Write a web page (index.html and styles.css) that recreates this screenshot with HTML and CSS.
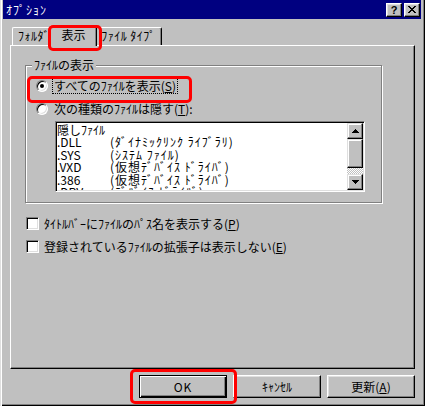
FILE: index.html
```html
<!DOCTYPE html>
<html lang="ja">
<head>
    <meta charset="UTF-8">
    <title>ｵﾌﾟｼｮﾝ</title>
    <link rel="stylesheet" href="styles.css">
</head>
<body>
    <div class="window">
        <div class="titlebar">
            <span class="title">ｵﾌﾟｼｮﾝ</span>
            <div class="caption-buttons">
                <button class="caption-button help-button">?</button>
                <button class="caption-button">
                    <svg width="8" height="7" viewBox="0 0 8 7" shape-rendering="crispEdges">
                        <path d="M0 0h2v1h1v1h2V1h1V0h2v1H7v1H6v1H5v1h1v1h1v1h1v1H6V6H5V5H3v1H2v1H0V6h1V5h1V4h1V3H2V2H1V1H0z" fill="#000"></path>
                    </svg>
                </button>
            </div>
        </div>

        <div class="dialog">
            <div class="tabs">
                <div class="tab tab-first">ﾌｫﾙﾀﾞ</div>
                <div class="tab tab-active">表示</div>
                <div class="tab tab-last">ﾌｧｲﾙ ﾀｲﾌﾟ</div>
            </div>

            <div class="panel">
                <div class="group">
                    <span class="group-title">ﾌｧｲﾙの表示</span>
                    <div class="option">
                        <span class="radio checked"></span>
                        <span class="option-label focused">すべてのﾌｧｲﾙを表示(<u>S</u>)</span>
                    </div>
                    <div class="option option-second">
                        <span class="radio"></span>
                        <span class="option-label">次の種類のﾌｧｲﾙは隠す(<u>T</u>):</span>
                    </div>
                    <div class="listbox">
                        <div class="list-items">
                            <div class="list-row">隠しﾌｧｲﾙ</div>
                            <div class="list-row"><span class="ext">.DLL</span><span class="desc">(ﾀﾞｲﾅﾐｯｸﾘﾝｸ ﾗｲﾌﾞﾗﾘ)</span></div>
                            <div class="list-row"><span class="ext">.SYS</span><span class="desc">(ｼｽﾃﾑ ﾌｧｲﾙ)</span></div>
                            <div class="list-row"><span class="ext">.VXD</span><span class="desc">(仮想ﾃﾞﾊﾞｲｽ ﾄﾞﾗｲﾊﾞ)</span></div>
                            <div class="list-row"><span class="ext">.386</span><span class="desc">(仮想ﾃﾞﾊﾞｲｽ ﾄﾞﾗｲﾊﾞ)</span></div>
                            <div class="list-row"><span class="ext">.DRV</span><span class="desc">(ﾃﾞﾊﾞｲｽ ﾄﾞﾗｲﾊﾞ)</span></div>
                        </div>
                        <div class="scrollbar">
                            <div class="scroll-button">
                                <svg width="7" height="4" viewBox="0 0 7 4" shape-rendering="crispEdges"><path d="M3 0h1v1h1v1h1v1h1v1H0V3h1V2h1V1h1z" fill="#000"></path></svg>
                            </div>
                            <div class="scroll-thumb"></div>
                            <div class="scroll-track"></div>
                            <div class="scroll-button">
                                <svg width="7" height="4" viewBox="0 0 7 4" shape-rendering="crispEdges"><path d="M0 0h7v1H6v1H5v1H4v1H3V3H2V2H1V1H0z" fill="#000"></path></svg>
                            </div>
                        </div>
                    </div>
                </div>

                <div class="check-row">
                    <span class="checkbox"></span>
                    <span>ﾀｲﾄﾙﾊﾞｰにﾌｧｲﾙのﾊﾟｽ名を表示する(<u>P</u>)</span>
                </div>
                <div class="check-row check-second">
                    <span class="checkbox"></span>
                    <span>登録されているﾌｧｲﾙの拡張子は表示しない(<u>E</u>)</span>
                </div>
            </div>

            <div class="buttons">
                <button class="push-button default-button">OK</button>
                <button class="push-button">ｷｬﾝｾﾙ</button>
                <button class="push-button">更新(<u>A</u>)</button>
            </div>
        </div>

        <!-- red highlight marks -->
        <div class="mark mark-tab"></div>
        <div class="mark mark-radio"></div>
        <div class="mark mark-ok"></div>
    </div>
</body>
</html>
```

FILE: styles.css
```css
body {
    margin: 0;
    font-family: "Noto Sans CJK JP", "Noto Sans", sans-serif;
    font-size: 12px;
    color: #000;
    background-color: #c0c0c0;
}
.window {
    position: relative;
    width: 425px;
    height: 406px;
    box-sizing: border-box;
    padding: 0 4px 4px 3px;
    background-color: #c0c0c0;
    box-shadow: inset 1px 0 #dfdfdf, inset 2px 0 #fff, inset -1px -1px #000, inset -2px -2px #808080;
    overflow: hidden;
}
.titlebar {
    display: flex;
    justify-content: space-between;
    align-items: center;
    height: 19px;
    padding: 0 1px 0 3px;
    background-color: #000080;
    color: #fff;
    line-height: 12px;
}
.title {
    letter-spacing: 1px;
}
.caption-buttons {
    display: flex;
    gap: 2px;
}
.caption-button {
    display: flex;
    justify-content: center;
    align-items: center;
    width: 16px;
    height: 14px;
    padding: 0;
    box-sizing: border-box;
    background-color: #c0c0c0;
    border: 1px solid;
    border-color: #fff #000 #000 #fff;
    box-shadow: inset -1px -1px #808080, inset 1px 1px #dfdfdf;
}
.help-button {
    font-family: "Liberation Sans", sans-serif;
    font-weight: bold;
    font-size: 11px;
    line-height: 10px;
    color: #000;
}
.dialog {
    padding: 6px 6px 0 7px;
}
.tabs {
    display: flex;
    align-items: flex-end;
    height: 20px;
    padding-left: 2px;
}
.tab {
    height: 18px;
    box-sizing: border-box;
    border-top: 1px solid #fff;
    border-left: 1px solid #fff;
    border-right: 1px solid #000;
    border-top-left-radius: 2px;
    border-top-right-radius: 2px;
    box-shadow: inset -1px 0 #808080;
    line-height: 16px;
    white-space: nowrap;
    overflow: hidden;
}
.tab-first {
    width: 40px;
    padding-left: 5px;
    letter-spacing: 0.5px;
}
.tab-active {
    position: relative;
    z-index: 1;
    width: 47px;
    height: 21px;
    margin: 0 -2px -1px -2px;
    background-color: #c0c0c0;
    text-align: center;
    line-height: 17px;
}
.tab-last {
    width: 67px;
    text-align: center;
    letter-spacing: 0.5px;
}
.panel {
    height: 324px;
    box-sizing: border-box;
    border: 1px solid;
    border-color: #fff #000 #000 #fff;
    box-shadow: inset -1px -1px #808080;
    overflow: hidden;
}
.group {
    position: relative;
    width: 357px;
    height: 138px;
    box-sizing: border-box;
    margin: 19px 0 0 14px;
    padding: 12px 0 0 10px;
    border: 1px solid #808080;
    box-shadow: inset 1px 1px #fff, 1px 1px #fff;
}
.group-title {
    position: absolute;
    top: -7px;
    left: 6px;
    padding: 0 2px;
    line-height: 12px;
    background-color: #c0c0c0;
}
.option {
    display: flex;
    align-items: center;
    gap: 4px;
    height: 16px;
}
.option-second {
    margin-top: 7px;
}
.radio {
    position: relative;
    width: 12px;
    height: 12px;
    box-sizing: border-box;
    border-radius: 50%;
    background-color: #fff;
    border: 1px solid;
    border-color: #808080 #fff #fff #808080;
    box-shadow: inset 1px 1px #000, inset -1px -1px #dfdfdf;
}
.radio.checked::after {
    content: "";
    position: absolute;
    top: 3px;
    left: 3px;
    width: 4px;
    height: 4px;
    border-radius: 50%;
    background-color: #000;
}
.option-label {
    padding: 0 1px;
    border: 1px solid transparent;
    line-height: 14px;
    white-space: nowrap;
}
.option-label.focused {
    border: 1px dotted #000;
}
.listbox {
    display: flex;
    width: 310px;
    height: 71px;
    box-sizing: border-box;
    margin: 4px 0 0 19px;
    padding: 1px;
    background-color: #fff;
    border: 1px solid;
    border-color: #808080 #fff #fff #808080;
    box-shadow: inset 1px 1px #000, inset -1px -1px #dfdfdf;
}
.list-items {
    flex: 1;
    overflow: hidden;
    padding-top: 1px;
}
.list-row {
    display: flex;
    height: 12.4px;
    line-height: 12.4px;
    white-space: nowrap;
}
.ext {
    width: 53px;
}
.desc {
    letter-spacing: 1px;
}
.scrollbar {
    display: flex;
    flex-direction: column;
    width: 16px;
}
.scroll-button,
.scroll-thumb {
    display: flex;
    justify-content: center;
    align-items: center;
    height: 16px;
    box-sizing: border-box;
    background-color: #c0c0c0;
    border: 1px solid;
    border-color: #dfdfdf #000 #000 #dfdfdf;
    box-shadow: inset -1px -1px #808080, inset 1px 1px #fff;
}
.scroll-thumb {
    height: 29px;
}
.scroll-track {
    flex: 1;
    background: repeating-conic-gradient(#fff 0 25%, #c0c0c0 0 50%) 0 0 / 2px 2px;
}
.check-row {
    display: flex;
    align-items: center;
    gap: 5px;
    height: 13px;
    margin: 14px 0 0 15px;
    white-space: nowrap;
}
.check-second {
    margin-top: 10px;
}
.checkbox {
    width: 13px;
    height: 13px;
    box-sizing: border-box;
    background-color: #fff;
    border: 1px solid;
    border-color: #808080 #fff #fff #808080;
    box-shadow: inset 1px 1px #000, inset -1px -1px #dfdfdf;
}
.buttons {
    display: flex;
    justify-content: flex-end;
    gap: 6px;
    margin-top: 6px;
}
.push-button {
    width: 88px;
    height: 23px;
    box-sizing: border-box;
    padding: 0;
    font-family: inherit;
    font-size: 12px;
    color: #000;
    background-color: #c0c0c0;
    border: 1px solid;
    border-color: #fff #000 #000 #fff;
    box-shadow: inset -1px -1px #808080, inset 1px 1px #dfdfdf;
}
.default-button {
    border-color: #000;
    letter-spacing: 1px;
    box-shadow: inset 1px 1px #fff, inset -1px -1px #000, inset -2px -2px #808080;
}
.mark {
    position: absolute;
    box-sizing: border-box;
    border: 3px solid #ff0000;
    border-radius: 5px;
    z-index: 5;
}
.mark-tab {
    left: 48px;
    top: 25px;
    width: 54px;
    height: 26px;
}
.mark-radio {
    left: 27px;
    top: 76px;
    width: 165px;
    height: 27px;
}
.mark-ok {
    left: 130px;
    top: 369px;
    width: 107px;
    height: 35px;
}
```
